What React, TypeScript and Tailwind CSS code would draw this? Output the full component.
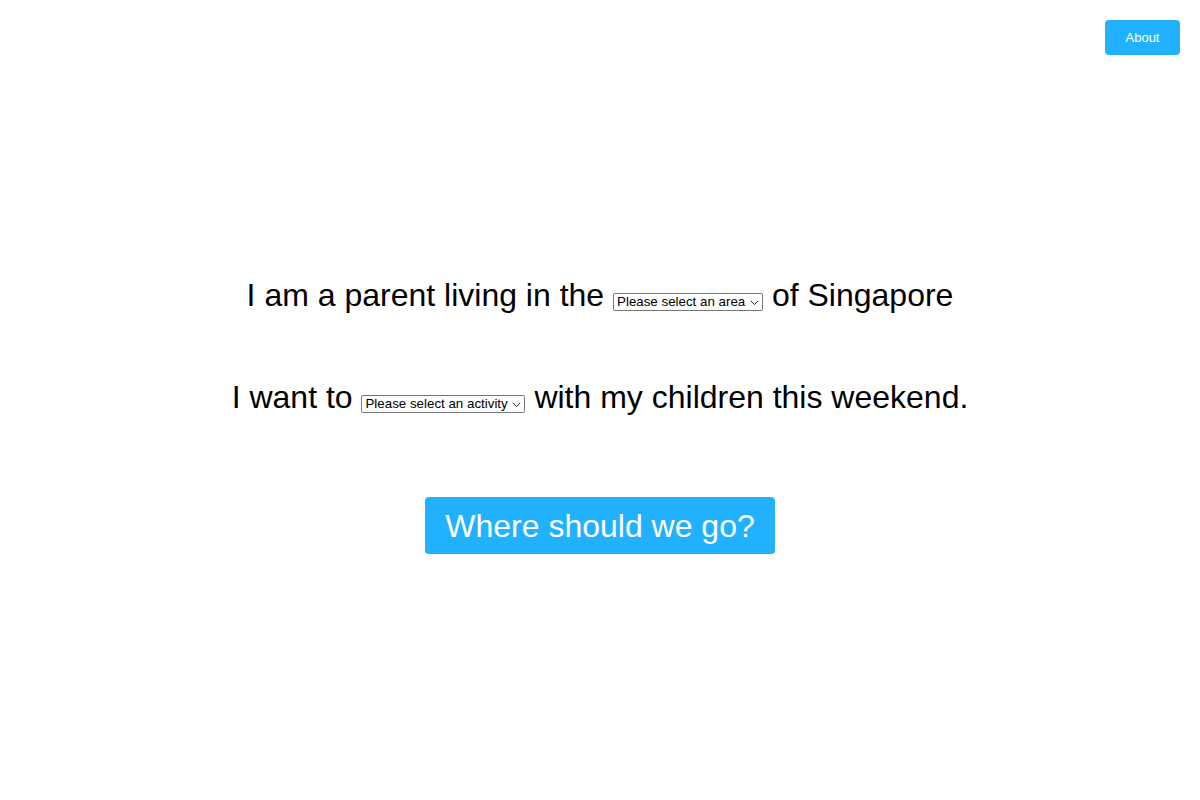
import React from "react";

function Select({ label, width }: { label: string; width: string }) {
  return (
    <span className={`relative inline-flex align-baseline leading-none ${width}`}>
      <select
        className="block h-[18px] w-full appearance-none rounded-[2px] border border-[#767676] bg-white pl-[3px] pr-[16px] text-[13.33px] leading-[16px] text-black"
        style={{ fontFamily: '"Liberation Sans", Arial, sans-serif' }}
        defaultValue=""
      >
        <option value="">{label}</option>
      </select>
      <svg
        className="pointer-events-none absolute right-[4px] top-[7px]"
        width="9"
        height="6"
        viewBox="0 0 9 6"
        fill="none"
      >
        <path d="M0.8 0.8 L4.5 4.6 L8.2 0.8" stroke="#222" strokeWidth="1" />
      </svg>
    </span>
  );
}

export default function App() {
  return (
    <div
      className="relative h-[800px] w-[1200px] bg-white text-black"
      style={{ fontFamily: '"Liberation Sans", Arial, Helvetica, sans-serif' }}
    >
      <div className="flex justify-end pr-[20px] pt-[20px]">
        <button className="h-[35px] w-[75px] rounded-[4px] bg-[#22b1ff] text-[13px] text-white">
          About
        </button>
      </div>
      <div className="flex flex-col items-center pt-[222px]">
        <p className="text-[32px] leading-[37px]">
          I am a parent living in the <Select label="Please select an area" width="w-[150px]" /> of Singapore
        </p>
        <p className="mt-[65px] text-[32px] leading-[37px]">
          I want to <Select label="Please select an activity" width="w-[164px]" /> with my children this weekend.
        </p>
        <button className="mt-[81px] h-[57px] w-[350px] rounded-[4px] bg-[#22b1ff] text-[32px] text-white">
          Where should we go?
        </button>
      </div>
    </div>
  );
}
